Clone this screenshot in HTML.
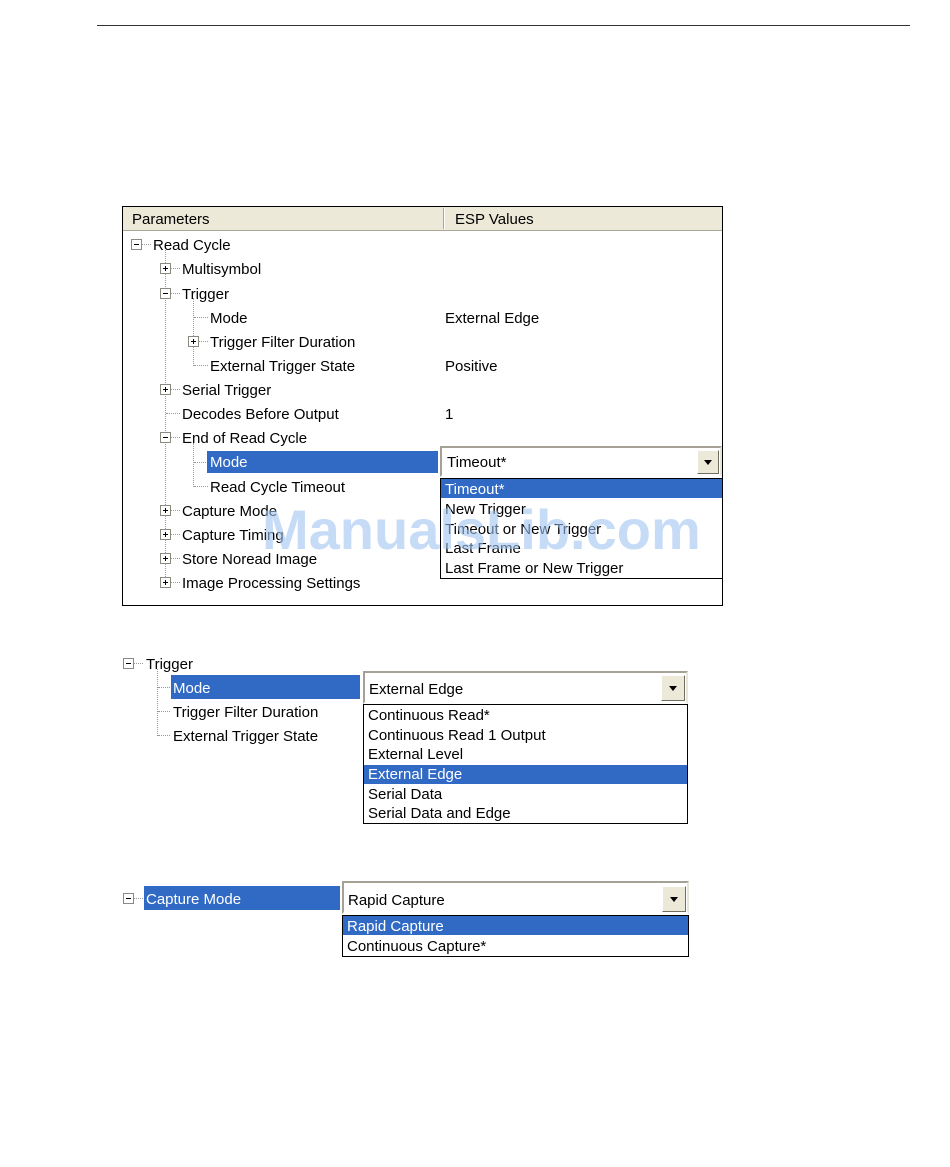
<!DOCTYPE html>
<html><head><meta charset="utf-8"><style>
body{margin:0;width:950px;height:1167px;background:#fff;position:relative;overflow:hidden;font-family:"Liberation Sans","DejaVu Sans",sans-serif;font-size:15px;color:#000}
.a{position:absolute;white-space:nowrap;line-height:20px;padding-top:1px}
.t{position:absolute;white-space:nowrap;line-height:22px;height:22px;padding-top:2px}
.bx{position:absolute;width:9px;height:9px;border:1px solid #8a8a80;background:#fff}
.bx:before{content:"";position:absolute;left:2px;top:4px;width:5px;height:1px;background:#000}
.bx.p:after{content:"";position:absolute;left:4px;top:2px;width:1px;height:5px;background:#000}
.h{position:absolute;border-top:1px dotted #999;height:0}
.v{position:absolute;border-left:1px dotted #999;width:0}
.hl{position:absolute;background:#316ac5}
.w{color:#fff}
.combo{position:absolute;background:#fff;border-top:2px solid #a5a196;border-left:2px solid #a5a196;border-right:2px solid #e8e6dc;border-bottom:2px solid #fff;box-sizing:border-box}
.btn{position:absolute;background:#ece9d8;border:1px solid #fff;border-right-color:#716f64;border-bottom-color:#716f64;box-sizing:border-box}
.btn:after{content:"";position:absolute;left:50%;top:50%;margin-left:-4px;margin-top:-2px;border-left:4px solid transparent;border-right:4px solid transparent;border-top:5px solid #000}
.list{position:absolute;background:#fff;border:1px solid #000;box-sizing:border-box}
</style></head><body>
<div style="position:absolute;left:97px;top:25px;width:813px;height:1px;background:#333"></div>

<!-- Panel 1 -->
<div style="position:absolute;left:122px;top:206px;width:601px;height:400px;border:1px solid #000;box-sizing:border-box"></div>
<div style="position:absolute;left:123px;top:207px;width:599px;height:23px;background:#ece9d8;border-bottom:1px solid #aca899"></div>
<div style="position:absolute;left:443px;top:208px;width:1px;height:21px;background:#aca899"></div>
<div style="position:absolute;left:444px;top:208px;width:1px;height:21px;background:#fff"></div>
<div class="a" style="left:132px;top:209px">Parameters</div>
<div class="a" style="left:455px;top:209px">ESP Values</div>

<div class="v" style="left:165px;top:250px;height:333px"></div>
<div class="v" style="left:193px;top:298px;height:68px"></div>
<div class="v" style="left:193px;top:443px;height:44px"></div>

<div class="bx" style="left:131px;top:239px"></div><div class="h" style="left:142px;top:244px;width:9px"></div>
<div class="t" style="left:153px;top:233px">Read Cycle</div>

<div class="bx p" style="left:160px;top:263px"></div><div class="h" style="left:171px;top:268px;width:9px"></div>
<div class="t" style="left:182px;top:257px">Multisymbol</div>
<div class="bx" style="left:160px;top:288px"></div><div class="h" style="left:171px;top:293px;width:9px"></div>
<div class="t" style="left:182px;top:282px">Trigger</div>
<div class="h" style="left:194px;top:317px;width:14px"></div>
<div class="t" style="left:210px;top:306px">Mode</div><div class="t" style="left:445px;top:306px">External Edge</div>
<div class="bx p" style="left:188px;top:336px"></div><div class="h" style="left:199px;top:341px;width:9px"></div>
<div class="t" style="left:210px;top:330px">Trigger Filter Duration</div>
<div class="h" style="left:194px;top:365px;width:14px"></div>
<div class="t" style="left:210px;top:354px">External Trigger State</div><div class="t" style="left:445px;top:354px">Positive</div>
<div class="bx p" style="left:160px;top:384px"></div><div class="h" style="left:171px;top:389px;width:9px"></div>
<div class="t" style="left:182px;top:378px">Serial Trigger</div>
<div class="h" style="left:166px;top:413px;width:14px"></div>
<div class="t" style="left:182px;top:402px">Decodes Before Output</div><div class="t" style="left:445px;top:402px">1</div>
<div class="bx" style="left:160px;top:432px"></div><div class="h" style="left:171px;top:437px;width:9px"></div>
<div class="t" style="left:182px;top:426px">End of Read Cycle</div>
<div class="h" style="left:194px;top:462px;width:14px"></div>
<div class="hl" style="left:207px;top:451px;width:231px;height:22px"></div>
<div class="t w" style="left:210px;top:450px">Mode</div>
<div class="h" style="left:194px;top:486px;width:14px"></div>
<div class="t" style="left:210px;top:475px">Read Cycle Timeout</div>
<div class="bx p" style="left:160px;top:505px"></div><div class="h" style="left:171px;top:510px;width:9px"></div>
<div class="t" style="left:182px;top:499px">Capture Mode</div>
<div class="bx p" style="left:160px;top:529px"></div><div class="h" style="left:171px;top:534px;width:9px"></div>
<div class="t" style="left:182px;top:523px">Capture Timing</div>
<div class="bx p" style="left:160px;top:553px"></div><div class="h" style="left:171px;top:558px;width:9px"></div>
<div class="t" style="left:182px;top:547px">Store Noread Image</div>
<div class="bx p" style="left:160px;top:577px"></div><div class="h" style="left:171px;top:582px;width:9px"></div>
<div class="t" style="left:182px;top:571px">Image Processing Settings</div>

<div class="combo" style="left:440px;top:446px;width:282px;height:31px"></div>
<div class="t" style="left:447px;top:450px">Timeout*</div>
<div class="btn" style="left:697px;top:450px;width:22px;height:24px"></div>
<div class="list" style="left:440px;top:478px;width:283px;height:101px"></div>
<div class="hl" style="left:441px;top:479px;width:281px;height:19px"></div>
<div class="a w" style="left:445px;top:479px">Timeout*</div>
<div class="a" style="left:445px;top:499px">New Trigger</div>
<div class="a" style="left:445px;top:519px">Timeout or New Trigger</div>
<div class="a" style="left:445px;top:538px">Last Frame</div>
<div class="a" style="left:445px;top:558px">Last Frame or New Trigger</div>
<div class="a" style="left:262px;top:499px;font-size:56px;line-height:60px;font-weight:bold;color:rgba(160,195,240,0.6)">ManualsLib.com</div>

<!-- Panel 2 -->
<div class="bx" style="left:123px;top:658px"></div><div class="h" style="left:134px;top:663px;width:9px"></div>
<div class="t" style="left:146px;top:652px">Trigger</div>
<div class="v" style="left:157px;top:669px;height:67px"></div>
<div class="h" style="left:158px;top:687px;width:12px"></div>
<div class="h" style="left:158px;top:711px;width:12px"></div>
<div class="h" style="left:158px;top:735px;width:12px"></div>
<div class="hl" style="left:171px;top:675px;width:189px;height:24px"></div>
<div class="t w" style="left:173px;top:676px">Mode</div>
<div class="t" style="left:173px;top:700px">Trigger Filter Duration</div>
<div class="t" style="left:173px;top:724px">External Trigger State</div>
<div class="combo" style="left:363px;top:671px;width:325px;height:33px"></div>
<div class="t" style="left:369px;top:677px">External Edge</div>
<div class="btn" style="left:661px;top:675px;width:24px;height:26px"></div>
<div class="list" style="left:363px;top:704px;width:325px;height:120px"></div>
<div class="a" style="left:368px;top:705px">Continuous Read*</div>
<div class="a" style="left:368px;top:725px">Continuous Read 1 Output</div>
<div class="a" style="left:368px;top:744px">External Level</div>
<div class="hl" style="left:364px;top:765px;width:323px;height:19px"></div>
<div class="a w" style="left:368px;top:764px">External Edge</div>
<div class="a" style="left:368px;top:784px">Serial Data</div>
<div class="a" style="left:368px;top:803px">Serial Data and Edge</div>

<!-- Panel 3 -->
<div class="bx" style="left:123px;top:893px"></div><div class="h" style="left:134px;top:898px;width:9px"></div>
<div class="hl" style="left:144px;top:886px;width:196px;height:24px"></div>
<div class="t w" style="left:146px;top:887px">Capture Mode</div>
<div class="combo" style="left:342px;top:881px;width:347px;height:33px"></div>
<div class="t" style="left:348px;top:888px">Rapid Capture</div>
<div class="btn" style="left:662px;top:886px;width:24px;height:26px"></div>
<div class="list" style="left:342px;top:915px;width:347px;height:42px"></div>
<div class="hl" style="left:343px;top:916px;width:345px;height:19px"></div>
<div class="a w" style="left:347px;top:916px">Rapid Capture</div>
<div class="a" style="left:347px;top:936px">Continuous Capture*</div>
</body></html>
